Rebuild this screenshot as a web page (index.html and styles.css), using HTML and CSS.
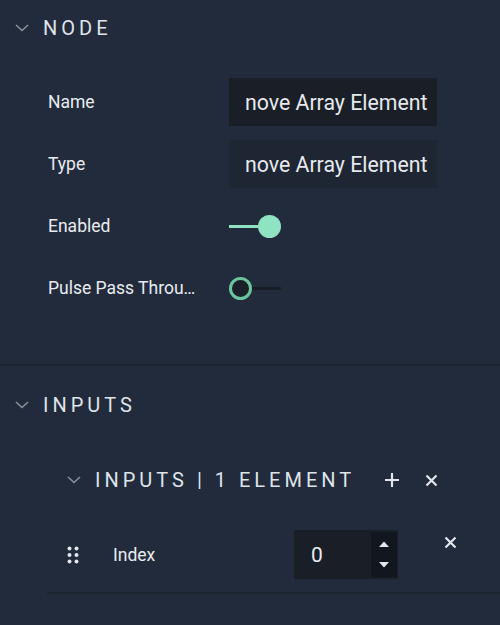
FILE: index.html
```html
<!DOCTYPE html>
<html>
<head>
<meta charset="utf-8">
<link rel="stylesheet" href="styles.css">
</head>
<body>
<div class="panel">
  <section class="section node">
    <div class="sec-head">
      <svg class="chev" width="14" height="8" viewBox="0 0 14 8"><path d="M1 1 L7 6.5 L13 1" fill="none" stroke="#8a909c" stroke-width="1.6"/></svg>
      <span class="sec-title">NODE</span>
    </div>
    <div class="rows">
      <div class="row">
        <span class="label">Name</span>
        <div class="text-input">nove Array Element</div>
      </div>
      <div class="row">
        <span class="label">Type</span>
        <div class="text-input readonly">nove Array Element</div>
      </div>
      <div class="row">
        <span class="label">Enabled</span>
        <div class="toggle on"><span class="track"></span><span class="knob"></span></div>
      </div>
      <div class="row">
        <span class="label">Pulse Pass Through</span>
        <div class="toggle off"><span class="knob"></span><span class="track"></span></div>
      </div>
    </div>
  </section>
  <section class="section inputs">
    <div class="sec-head">
      <svg class="chev" width="14" height="8" viewBox="0 0 14 8"><path d="M1 1 L7 6.5 L13 1" fill="none" stroke="#8a909c" stroke-width="1.6"/></svg>
      <span class="sec-title">INPUTS</span>
    </div>
    <div class="sub-head">
      <svg class="chev" width="14" height="8" viewBox="0 0 14 8"><path d="M1 1 L7 6.5 L13 1" fill="none" stroke="#8a909c" stroke-width="1.6"/></svg>
      <span class="sec-title">INPUTS | 1 ELEMENT</span>
      <svg class="plus" width="16" height="16" viewBox="0 0 16 16"><path d="M8 1 V15 M1 8 H15" stroke="#e3e6ec" stroke-width="2.2"/></svg>
      <svg class="close" width="13" height="13" viewBox="0 0 13 13"><path d="M1.5 1.5 L11.5 11.5 M11.5 1.5 L1.5 11.5" stroke="#e3e6ec" stroke-width="2.2"/></svg>
    </div>
    <div class="item">
      <svg class="drag" width="12" height="18" viewBox="0 0 12 18"><circle cx="2.5" cy="2.5" r="2"/><circle cx="9.5" cy="2.5" r="2"/><circle cx="2.5" cy="9" r="2"/><circle cx="9.5" cy="9" r="2"/><circle cx="2.5" cy="15.5" r="2"/><circle cx="9.5" cy="15.5" r="2"/></svg>
      <span class="item-label">Index</span>
      <div class="num-input">
        <span class="num-val">0</span>
        <div class="spinner">
          <svg width="10" height="6" viewBox="0 0 10 6"><path d="M0 6 L5 0.5 L10 6 Z" fill="#e3e6ec"/></svg>
          <svg width="10" height="6" viewBox="0 0 10 6"><path d="M0 0 L5 5.5 L10 0 Z" fill="#e3e6ec"/></svg>
        </div>
      </div>
      <svg class="item-close" width="13" height="13" viewBox="0 0 13 13"><path d="M1.5 1.5 L11.5 11.5 M11.5 1.5 L1.5 11.5" stroke="#e3e6ec" stroke-width="2.2"/></svg>
    </div>
    <div class="item-sep"></div>
  </section>
</div>
</body>
</html>
```

FILE: styles.css
```css
html, body {
  margin: 0;
  padding: 0;
  background: #222b3b;
  font-family: Roboto, "Liberation Sans", sans-serif;
  color: #e8ebf0;
}
.panel {
  width: 500px;
  height: 625px;
  overflow: hidden;
}
.section.node {
  border-bottom: 2px solid #1b2230;
  padding-bottom: 52px;
}
.sec-head {
  display: flex;
  align-items: center;
  height: 56px;
  padding-left: 15px;
}
.inputs .sec-head {
  margin-top: 11px;
}
.chev {
  display: block;
  flex: none;
  margin-right: 14px;
}
.sec-title {
  font-size: 20px;
  letter-spacing: 4px;
  color: #dfe3ea;
  line-height: 1;
}
.rows {
  display: flex;
  flex-direction: column;
  gap: 14px;
  margin-top: 22px;
}
.row {
  display: flex;
  align-items: center;
  height: 48px;
  padding-left: 48px;
}
.label {
  width: 151px;
  margin-right: 30px;
  font-size: 17.5px;
  white-space: nowrap;
  overflow: hidden;
  text-overflow: ellipsis;
}
.text-input {
  width: 208px;
  height: 48px;
  box-sizing: border-box;
  padding-left: 16px;
  display: flex;
  align-items: center;
  background: #191e27;
  font-size: 21.3px;
  color: #e6e9ee;
  white-space: nowrap;
  overflow: hidden;
}
.text-input.readonly {
  background: #1e2533;
}
.toggle {
  display: flex;
  align-items: center;
  width: 52px;
}
.toggle .track {
  height: 3px;
  flex: 1;
}
.toggle .knob {
  width: 23px;
  height: 23px;
  border-radius: 50%;
  box-sizing: border-box;
  flex: none;
}
.toggle.on .track {
  background: #8fe3c2;
}
.toggle.on .knob {
  background: #8fe3c2;
}
.toggle.off .knob {
  border: 3px solid #6cc49f;
  background: #1a1f29;
}
.toggle.off .track {
  background: #181d27;
}
.sub-head {
  display: flex;
  align-items: center;
  height: 48px;
  padding-left: 67px;
  margin-top: 23px;
}
.plus {
  display: block;
  margin-left: 29px;
}
.close {
  display: block;
  margin-left: 25px;
}
.item {
  display: flex;
  align-items: center;
  height: 49px;
  margin-top: 26px;
  padding-left: 67px;
}
.drag {
  display: block;
  fill: #e3e6ec;
  margin-right: 34px;
}
.item-label {
  width: 181px;
  font-size: 17.5px;
}
.num-input {
  display: flex;
  width: 104px;
  height: 49px;
  background: #191e27;
}
.num-val {
  flex: 1;
  padding-left: 17px;
  font-size: 21px;
  display: flex;
  align-items: center;
}
.spinner {
  width: 26px;
  margin: 2px 1px 2px 0;
  background: #12161f;
  display: flex;
  flex-direction: column;
  align-items: center;
  justify-content: space-between;
  padding: 9px 0 9px;
  box-sizing: border-box;
}
.spinner svg {
  display: block;
}
.item-close {
  display: block;
  align-self: flex-start;
  margin-top: 6px;
  margin-left: 46px;
}
.item-sep {
  margin-top: 13px;
  margin-left: 47px;
  height: 2px;
  background: #1b2230;
}
```
